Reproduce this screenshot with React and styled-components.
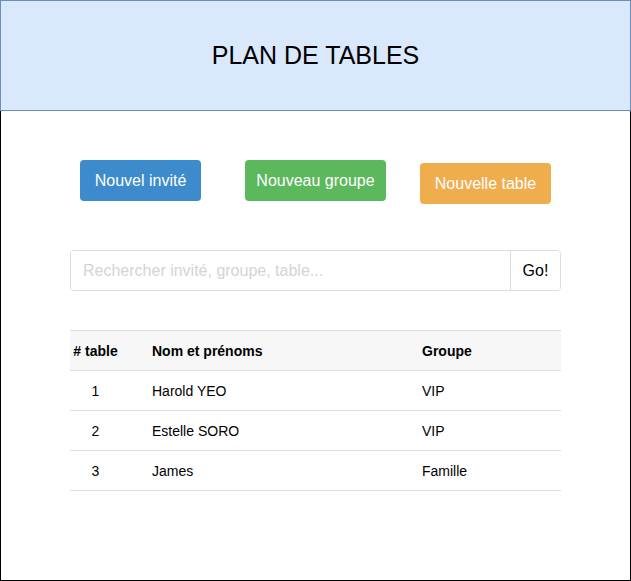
import React from "react";
import styled, { createGlobalStyle } from "styled-components";

const Global = createGlobalStyle`
  body {
    margin: 0;
    font-family: "Liberation Sans", Arial, sans-serif;
    background: #fff;
  }
  * { box-sizing: border-box; }
`;

const Page = styled.div`
  width: 631px;
  height: 581px;
  display: flex;
  flex-direction: column;
`;

const Header = styled.header`
  height: 111px;
  flex-shrink: 0;
  background: #dae8fc;
  border: 1px solid #6c8ebf;
  display: flex;
  align-items: center;
  justify-content: center;
`;

const Title = styled.h1`
  margin: 0;
  font-size: 25px;
  font-weight: normal;
  color: #000;
`;

const Body = styled.main`
  flex: 1;
  border: 1px solid #000;
  border-top: none;
  padding: 49px 69px 0 69px;
`;

const Toolbar = styled.div`
  display: flex;
  align-items: flex-start;
  padding-left: 10px;
`;

const ActionButton = styled.button`
  width: ${(p) => p.$width}px;
  height: 41px;
  margin-top: ${(p) => p.$offset || 0}px;
  margin-right: ${(p) => p.$after || 0}px;
  border: none;
  border-radius: 4px;
  background: ${(p) => p.$color};
  color: #fff;
  font-family: "Liberation Sans", Arial, sans-serif;
  font-size: 16px;
  padding: 0;
  cursor: pointer;
`;

const Search = styled.div`
  margin-top: 46px;
  display: flex;
  height: 41px;
  border: 1px solid #dcdcdc;
  border-radius: 4px;
  overflow: hidden;
`;

const SearchInput = styled.input`
  flex: 1;
  border: none;
  outline: none;
  padding: 0 12px;
  font-family: "Liberation Sans", Arial, sans-serif;
  font-size: 16px;
  color: #333;
  &::placeholder {
    color: #d4d4d4;
  }
`;

const GoButton = styled.button`
  width: 50px;
  border: none;
  border-left: 1px solid #dcdcdc;
  background: #fff;
  font-family: "Liberation Sans", Arial, sans-serif;
  font-size: 16px;
  color: #000;
  padding: 0;
`;

const Table = styled.div`
  margin-top: 39px;
  border-top: 1px solid #dddddd;
`;

const Row = styled.div`
  display: grid;
  grid-template-columns: 51px 301px 1fr;
  height: 40px;
  align-items: center;
  border-bottom: 1px solid #dddddd;
  background: ${(p) => (p.$head ? "#f7f7f7" : "#fff")};
  font-size: 14px;
  font-weight: ${(p) => (p.$head ? "bold" : "normal")};
  color: #000;
`;

const Cell = styled.div`
  padding-left: ${(p) => p.$indent || 0}px;
  text-align: ${(p) => (p.$center ? "center" : "left")};
  white-space: nowrap;
`;

const guests = [
  { table: 1, name: "Harold YEO", group: "VIP" },
  { table: 2, name: "Estelle SORO", group: "VIP" },
  { table: 3, name: "James", group: "Famille" },
];

export default function App() {
  return (
    <Page>
      <Global />
      <Header>
        <Title>PLAN DE TABLES</Title>
      </Header>
      <Body>
        <Toolbar>
          <ActionButton $width={121} $after={44} $color="#3d8bcd">
            Nouvel invité
          </ActionButton>
          <ActionButton $width={141} $after={34} $color="#5cb85c">
            Nouveau groupe
          </ActionButton>
          <ActionButton $width={131} $offset={3} $color="#f0ad4e">
            Nouvelle table
          </ActionButton>
        </Toolbar>
        <Search>
          <SearchInput placeholder="Rechercher invité, groupe, table..." />
          <GoButton>Go!</GoButton>
        </Search>
        <Table>
          <Row $head>
            <Cell $center># table</Cell>
            <Cell $indent={31}>Nom et prénoms</Cell>
            <Cell>Groupe</Cell>
          </Row>
          {guests.map((g) => (
            <Row key={g.table}>
              <Cell $center>{g.table}</Cell>
              <Cell $indent={31}>{g.name}</Cell>
              <Cell>{g.group}</Cell>
            </Row>
          ))}
        </Table>
      </Body>
    </Page>
  );
}
